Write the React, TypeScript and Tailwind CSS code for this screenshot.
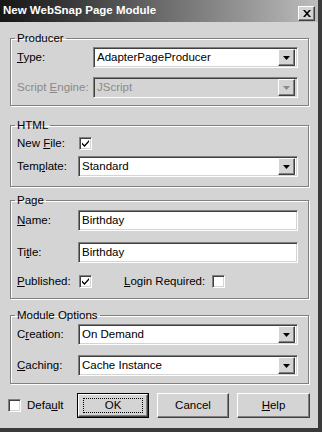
import React from 'react';

const sunken =
  'border border-t-[#808080] border-l-[#808080] border-b-white border-r-white shadow-[inset_1px_1px_0_#404040,inset_-1px_-1px_0_#d4d4d4]';
const raised =
  'border border-t-white border-l-white border-b-[#404040] border-r-[#404040] shadow-[inset_-1px_-1px_0_#808080]';

function Combo({ value, disabled = false }: { value: string; disabled?: boolean }) {
  return (
    <div
      className={`${sunken} ${disabled ? 'bg-[#d4d4d4] text-[#8a8a8a]' : 'bg-white text-black'} h-[21px] flex items-center pl-[3px] pr-[2px]`}
    >
      <span className="flex-1 leading-none">{value}</span>
      <div className={`${raised} bg-[#d4d4d4] w-[17px] h-[17px] flex items-center justify-center`}>
        <svg width="7" height="4" viewBox="0 0 7 4">
          <path d="M0 0h7L3.5 4z" fill={disabled ? '#8a8a8a' : '#000'} />
        </svg>
      </div>
    </div>
  );
}

function Field({ value }: { value: string }) {
  return (
    <div className={`${sunken} bg-white h-[21px] flex items-center pl-[3px]`}>
      <span className="leading-none">{value}</span>
    </div>
  );
}

function Check({ checked }: { checked: boolean }) {
  return (
    <div className={`${sunken} bg-white w-[13px] h-[13px] shrink-0 flex items-center justify-center`}>
      {checked && (
        <svg width="7" height="7" viewBox="0 0 7 7">
          <path d="M0 2.5l2.5 2.5L7 0v2L2.5 7 0 4.5z" fill="#000" />
        </svg>
      )}
    </div>
  );
}

function Group({ title, className, children }: { title: string; className: string; children: React.ReactNode }) {
  return (
    <fieldset
      className={`mx-[10px] w-[299px] min-w-0 border border-[#808080] shadow-[inset_1px_1px_0_#fff,1px_1px_0_#fff] pt-0 pl-[6px] pr-[10px] ${className}`}
    >
      <legend className="ml-[-2px] px-[2px] leading-[15px]">{title}</legend>
      {children}
    </fieldset>
  );
}

function Row({ label, children, labelW = 'w-[61px]', className = '' }: { label: React.ReactNode; children: React.ReactNode; labelW?: string; className?: string }) {
  return (
    <div className={`flex items-center ${className}`}>
      <span className={`${labelW} shrink-0`}>{label}</span>
      <div className="flex-1">{children}</div>
    </div>
  );
}

export default function App() {
  return (
    <div className="w-[322px] h-[432px] bg-[#d4d4d4] text-[11.5px] text-black border-r-[4px] border-b-[4px] border-r-[#3a3a3a] border-b-[#3a3a3a] overflow-hidden font-['Liberation_Sans',Arial,sans-serif]">
      <div className="h-[22px] bg-gradient-to-r from-[#161616] via-[#6a6a6a] to-[#bdbdbd] flex items-center pl-[3px] pr-[3px]">
        <span className="flex-1 text-white font-bold text-[11.5px]">New WebSnap Page Module</span>
        <div className={`${raised} bg-[#d4d4d4] w-[17px] h-[15px] flex items-center justify-center mt-[5px]`}>
          <svg width="8" height="7" viewBox="0 0 8 7">
            <path d="M0 0h2l2 2.3L6 0h2L5 3.5 8 7H6L4 4.7 2 7H0l3-3.5z" fill="#000" />
          </svg>
        </div>
      </div>

      <Group title="Producer" className="mt-[9px] pb-[7px]">
        <Row label={<><u>T</u>ype:</>} labelW="w-[76px]" className="mt-[1px]">
          <Combo value="AdapterPageProducer" />
        </Row>
        <Row label={<span className="text-[#8a8a8a]">Script <u>E</u>ngine:</span>} labelW="w-[76px]" className="mt-[9px]">
          <Combo value="JScript" disabled />
        </Row>
      </Group>

      <Group title="HTML" className="mt-[12px] pb-[9px]">
        <Row label={<>New <u>F</u>ile:</>} className="mt-[4px] h-[13px] leading-[13px]">
          <div className="ml-[1px]"><Check checked /></div>
        </Row>
        <Row label={<>Tem<u>p</u>late:</>} className="mt-[6px]">
          <Combo value="Standard" />
        </Row>
      </Group>

      <Group title="Page" className="mt-[6px] pb-[10px]">
        <Row label={<><u>N</u>ame:</>} className="mt-[2px]">
          <Field value="Birthday" />
        </Row>
        <Row label={<>Ti<u>t</u>le:</>} className="mt-[11px]">
          <Field value="Birthday" />
        </Row>
        <div className="flex items-center mt-[12px] h-[13px] leading-[13px]">
          <span className="w-[62px]"><u>P</u>ublished:</span>
          <Check checked />
          <span className="ml-[32px] mr-[7px]"><u>L</u>ogin Required:</span>
          <Check checked={false} />
        </div>
      </Group>

      <Group title="Module Options" className="mt-[9px] pb-[7px]">
        <Row label={<>C<u>r</u>eation:</>} className="mt-[1px]">
          <Combo value="On Demand" />
        </Row>
        <Row label={<><u>C</u>aching:</>} className="mt-[10px]">
          <Combo value="Cache Instance" />
        </Row>
      </Group>

      <div className="flex items-center mt-[9px] pl-[8px] h-[25px]">
        <Check checked={false} />
        <span className="ml-[6px] w-[50px]">Defa<u>u</u>lt</span>
        <div className="w-[72px] h-[25px] border border-black">
          <div className={`${raised} bg-[#d4d4d4] h-full flex items-center justify-center`}>
            <span className="border border-dotted border-black px-[21px] leading-[13px]">OK</span>
          </div>
        </div>
        <button className={`${raised} bg-[#d4d4d4] w-[72px] h-[25px] ml-[8px]`}>Cancel</button>
        <button className={`${raised} bg-[#d4d4d4] w-[73px] h-[25px] ml-[8px]`}><u>H</u>elp</button>
      </div>
    </div>
  );
}
